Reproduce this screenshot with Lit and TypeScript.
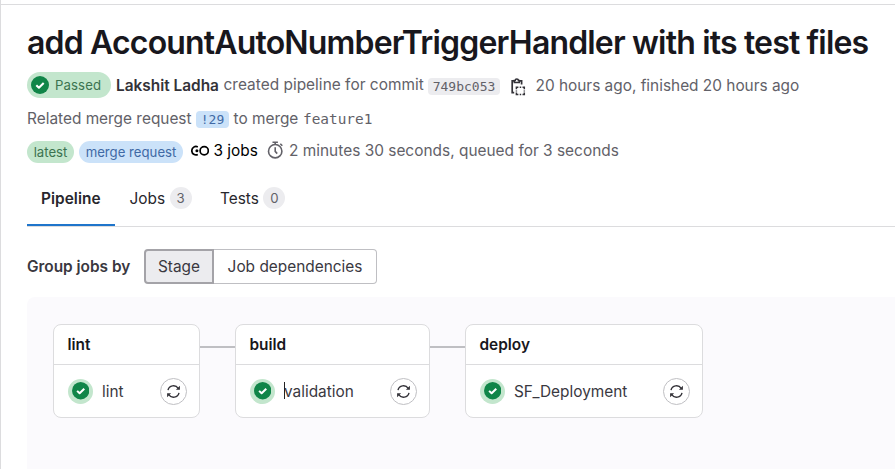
import { LitElement, html, css, svg } from "lit";
import { customElement, property } from "lit/decorators.js";

const check = svg`<circle cx="9" cy="9" r="9" fill="#108548"/><path d="M5.3 9.2 7.9 11.7 12.7 7" fill="none" stroke="#fff" stroke-width="2.1" stroke-linejoin="round"/>`;

@customElement("stage-card")
class StageCard extends LitElement {
  @property() stage = "";
  @property() job = "";
  @property({ type: Boolean }) caret = false;

  static styles = css`
    :host { display: block; box-sizing: border-box; height: 94px; border: 1px solid #dcdcde; border-radius: 8px; background: #fff; }
    .head { height: 40px; box-sizing: border-box; border-bottom: 1px solid #dcdcde; padding-left: 13.5px; line-height: 40px; font-weight: 600; color: #18171d; }
    .row { display: flex; align-items: center; height: 52px; padding: 0 12px 0 14px; }
    .status { width: 25px; height: 25px; border-radius: 50%; background: #c3e6cd; display: flex; align-items: center; justify-content: center; }
    .status svg { width: 17.4px; height: 17.4px; }
    .name { position: relative; margin-left: 9px; padding-top: 2px; flex: 1; color: #3a383f; }
    .caret { position: absolute; left: 0; top: 2px; width: 1px; height: 17px; background: #222; }
    .retry { width: 27px; height: 27px; box-sizing: border-box; border: 1px solid #bfbfc3; border-radius: 50%; display: flex; align-items: center; justify-content: center; }
  `;

  render() {
    return html`
      <div class="head">${this.stage}</div>
      <div class="row">
        <span class="status"><svg viewBox="0 0 18 18">${check}</svg></span>
        <span class="name">${this.caret ? html`<i class="caret"></i>` : null}${this.job}</span>
        <span class="retry">
          <svg width="15" height="15" viewBox="0 0 15 15" fill="none" stroke="#333238" stroke-width="1.4">
            <path d="M2 6.2A5.6 5.6 0 0 1 12.2 4.4M13 8.8A5.6 5.6 0 0 1 2.8 10.6"/>
            <path d="M13.9 1.8V5.8H9.9ZM1.1 13.2V9.2H5.1Z" fill="#333238" stroke="none"/>
          </svg>
        </span>
      </div>`;
  }
}

@customElement("app-root")
class AppRoot extends LitElement {
  static styles = css`
    :host { display: block; box-sizing: border-box; width: 895px; height: 469px; overflow: hidden; background: #fff; border-left: 1px solid #dcdcde; font: 15.4px/20px Inter, "Noto Sans", sans-serif; color: #626168; white-space: nowrap; }
    .bar { height: 4px; border-bottom: 1px solid #dcdcde; }
    .page { padding-left: 26px; }
    h1 { margin: 20px 0 0; height: 36px; font-size: 32px; line-height: 36px; font-weight: 600; letter-spacing: -0.83px; color: #18171d; }
    .line { display: flex; align-items: center; }
    .l1 { height: 26px; margin-top: 11px; }
    .l2 { height: 20px; margin-top: 11px; }
    .l3 { height: 22px; margin-top: 11px; }
    .passed { display: flex; align-items: center; box-sizing: border-box; width: 84px; height: 26px; padding-left: 4px; border-radius: 13px; background: #c3e6cd; color: #3b7350; font-size: 13.2px; letter-spacing: 0.1px; }
    .passed svg { width: 18px; height: 18px; margin-right: 6px; }
    .author { width: 107.5px; margin-left: 5px; padding-top: 2px; font-weight: 600; color: #333238; }
    .mono { font-family: "DejaVu Sans Mono", monospace; }
    .sha { box-sizing: border-box; width: 72px; height: 17px; line-height: 17px; margin-top: 2px; border-radius: 4px; background: #ececef; text-align: center; font-size: 13px; }
    .created { width: 204.5px; letter-spacing: 0.03px; }
    .copy { margin: 3px 0 0 9.5px; }
    .when { margin-left: 10px; padding-top: 2px; }
    .rel { width: 169px; }
    .mr { width: 33px; height: 17px; line-height: 17px; border-radius: 4px; background: #cbe2f9; color: #4069a5; text-align: center; font-size: 13px; }
    .to { width: 69.5px; margin-left: 4.5px; }
    .ref { font-size: 14.4px; }
    .pill { height: 22px; line-height: 22px; border-radius: 11px; font-size: 13.2px; text-align: center; margin-top: 1px; }
    .green { width: 47px; background: #c3e6cd; color: #3b7350; }
    .blue { width: 104px; margin-left: 5px; background: #cbe2f9; color: #4069a5; }
    .jobsicon { margin: -1px 0 0 8px; }
    .jobs { width: 49px; margin-left: 4.5px; color: #000; }
    .timer { margin: -2px 0 0 4.5px; }
    .dur { margin-left: 5px; letter-spacing: 0.02px; }
    .tabs { display: flex; height: 56px; margin-top: 8px; border-bottom: 1px solid #dcdcde; }
    .tab { display: flex; align-items: center; height: 56px; padding: 0 14px; box-sizing: border-box; color: #28272d; }
    .tab.on { width: 88px; height: 56px; border-bottom: 2px solid #1f75cb; padding-top: 3px; font-weight: 600; letter-spacing: 0.05px; }
    .t2 { width: 91px; padding-left: 14.5px; }
    .label { padding-top: 1px; }
    .count { width: 22px; height: 22px; line-height: 22px; margin-left: 4.5px; border-radius: 50%; background: #ececef; text-align: center; font-size: 13.2px; color: #626168; }
    .group { display: flex; align-items: center; height: 35px; margin-top: 22px; color: #3a383f; }
    .group b { width: 117px; font-weight: 600; }
    .btn { box-sizing: border-box; height: 35px; line-height: 33px; border: 1px solid #bfbfc3; text-align: center; }
    .stage { width: 70px; line-height: 31px; border: 2px solid #a4a3a8; border-radius: 4px 0 0 4px; background: #ececef; }
    .deps { width: 163px; border-left: 0; border-radius: 0 4px 4px 0; }
    .graph { display: flex; align-items: flex-start; box-sizing: border-box; height: 172px; margin-top: 13px; padding: 27px 0 0 26px; border-radius: 8px 0 0 0; background: #fbfafd; }
    .link { width: 35px; height: 2px; margin-top: 22px; background: #bfbfc3; }
    .w1 { width: 147px; }
    .w2 { width: 195px; }
    .w3 { width: 238px; }
  `;

  render() {
    return html`
      <div class="bar"></div>
      <div class="page">
        <h1>add AccountAutoNumberTriggerHandler with its test files</h1>
        <div class="line l1">
          <span class="passed"><svg viewBox="0 0 18 18">${check}</svg>Passed</span>
          <span class="author">Lakshit Ladha</span>
          <span class="created">created pipeline for commit</span>
          <span class="sha mono">749bc053</span>
          <svg class="copy" width="16" height="18" viewBox="0 0 16 18" fill="none" stroke="#333238" stroke-width="1.7">
            <path d="M4.2 14.7H2.2V2.9H4M9.5 2.9H11.6V6.5"/>
            <path d="M4.3 4.4V2.5H5.2A1.6 1.6 0 0 1 8.4 2.5H9.3V4.4Z" stroke-width="1.5"/>
            <path d="M6.4 11.2V9.2H8.4M12.5 9.2H14.3V11.2M14.3 14.5V16.4H12.5M8.4 16.4H6.4V14.5M9.7 9.2H11.2M9.7 16.4H11.2M6.4 12.4V13.4M14.3 12.4V13.4" stroke-width="1.5"/>
          </svg>
          <span class="when">20 hours ago, finished 20 hours ago</span>
        </div>
        <div class="line l2">
          <span class="rel">Related merge request</span>
          <span class="mr mono">!29</span>
          <span class="to">to merge</span>
          <span class="ref mono">feature1</span>
        </div>
        <div class="line l3">
          <span class="pill green">latest</span>
          <span class="pill blue">merge request</span>
          <svg class="jobsicon" width="18" height="12" viewBox="0 0 18 12" fill="none" stroke="#000" stroke-width="1.7">
            <path d="M6.8 1.9A4.2 4.2 0 1 0 6.8 9.5"/>
            <circle cx="13.2" cy="5.7" r="4.1"/>
            <circle cx="5.9" cy="5.7" r="1.5" fill="#000" stroke="none"/>
          </svg>
          <span class="jobs">3 jobs</span>
          <svg class="timer" width="17" height="18" viewBox="0 0 17 18" fill="none" stroke="#626168" stroke-width="1.6">
            <circle cx="8.2" cy="10.2" r="6.7"/>
            <path d="M5.5 1.2H10.9M8.2 1V3.5M8.2 6.3V10.4L10.2 12.6M13.3 2.8 15.3 4.8"/>
          </svg>
          <span class="dur">2 minutes 30 seconds, queued for 3 seconds</span>
        </div>
        <div class="tabs">
          <span class="tab on">Pipeline</span>
          <span class="tab t2"><span class="label">Jobs</span><span class="count">3</span></span>
          <span class="tab"><span class="label">Tests</span><span class="count">0</span></span>
        </div>
        <div class="group">
          <b>Group jobs by</b>
          <span class="btn stage">Stage</span><span class="btn deps">Job dependencies</span>
        </div>
        <div class="graph">
          <stage-card class="w1" stage="lint" job="lint"></stage-card>
          <span class="link"></span>
          <stage-card class="w2" stage="build" job="validation" caret></stage-card>
          <span class="link"></span>
          <stage-card class="w3" stage="deploy" job="SF_Deployment"></stage-card>
        </div>
      </div>`;
  }
}
